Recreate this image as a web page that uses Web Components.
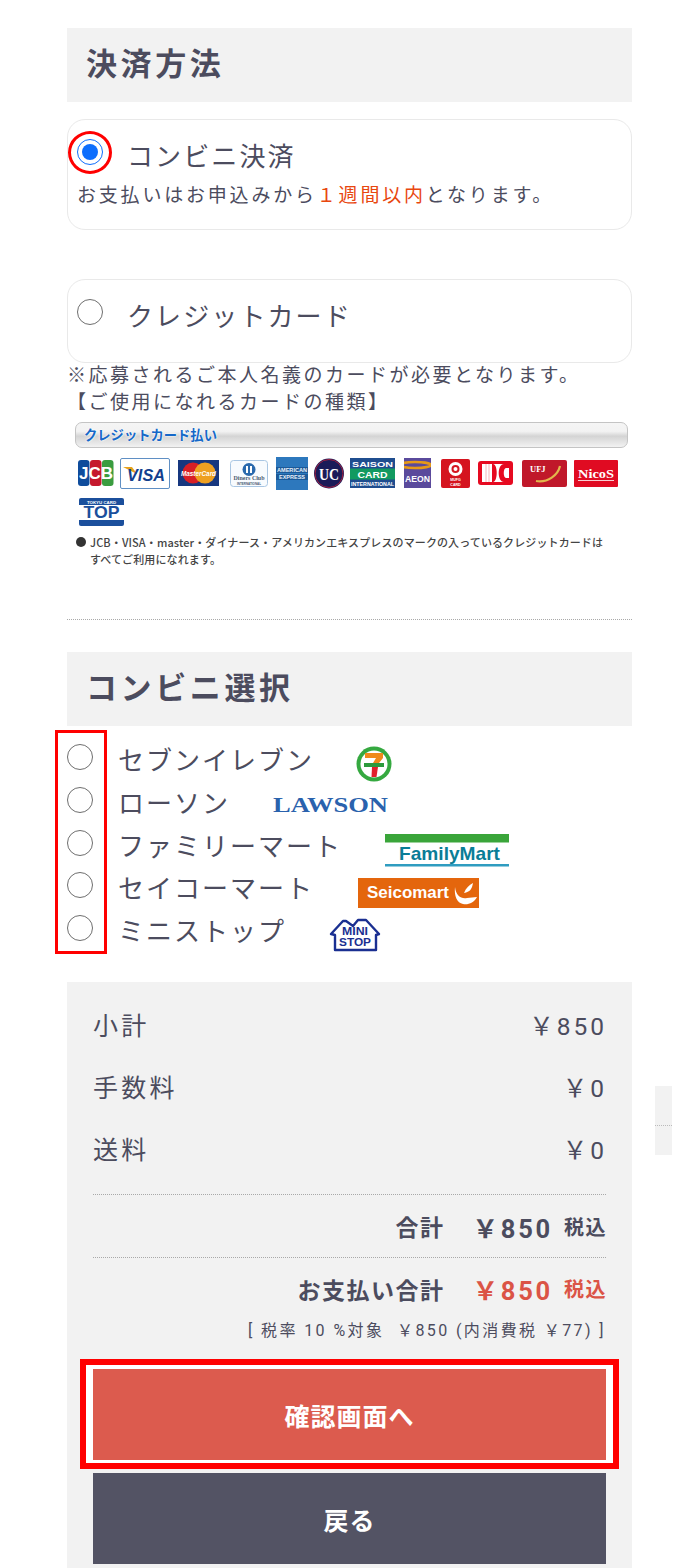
<!DOCTYPE html>
<html lang="ja"><head><meta charset="utf-8"><title>決済方法</title>
<style>
html,body{margin:0;padding:0;background:#fff;height:1568px;overflow:hidden}
body{font-family:"Noto Sans CJK JP","Noto Sans",sans-serif;color:#4c4c5e}
</style></head><body>
<checkout-page></checkout-page>
<template id="t-page"><style>
:host{display:block;position:relative;width:700px;height:1568px;overflow:hidden;box-sizing:border-box;padding:28px 68px 0 67px}
.gap-a{height:17px}.gap-b{height:49px}
.note{font-size:19px;line-height:27px;letter-spacing:2.5px;color:#4c4c5e;white-space:nowrap;margin-top:-3px}
hr{border:0;border-top:1px dotted #a9a9a9;margin:0}
.stores{position:relative;display:flex;flex-direction:column;padding-top:18px;height:256px;box-sizing:border-box}
.frame{position:absolute;left:-12px;top:4px;width:46px;height:218px;border:3px solid #f00;pointer-events:none}
.stub{position:absolute;left:655px;top:1086px;width:17px;height:69px;background:#f2f2f2}
.stub i{position:absolute;left:0;right:0;top:39px;border-top:1px dotted #bbb}
.fine{font-size:11px;line-height:17px;color:#444;padding-left:23px;position:relative;margin-top:8px;font-weight:500;white-space:nowrap;letter-spacing:.01em}
.fine b{position:absolute;left:9px;top:3px;width:10px;height:10px;border-radius:50%;background:#333}
</style>
<section-head>決済方法</section-head>
<div class="gap-a"></div>
<pay-option checked h="111" label="コンビニ決済">お支払いはお申込みから<span style="color:#e8470f">１週間以内</span>となります。</pay-option>
<div class="gap-b"></div>
<pay-option h="84" label="クレジットカード"></pay-option>
<div class="note">※応募されるご本人名義のカードが必要となります。<br>【ご使用になれるカードの種類】</div>
<card-bar>クレジットカード払い</card-bar>
<card-logos></card-logos>
<div class="fine"><b></b>JCB・VISA・master・ダイナース・アメリカンエキスプレスのマークの入っているクレジットカードは<br>すべてご利用になれます。</div>
<div style="height:51px"></div>
<hr>
<div style="height:32px"></div>
<section-head>コンビニ選択</section-head>
<div class="stores">
<store-row logo="seven">セブンイレブン</store-row>
<store-row logo="lawson">ローソン</store-row>
<store-row logo="family">ファミリーマート</store-row>
<store-row logo="seico">セイコーマート</store-row>
<store-row logo="mini">ミニストップ</store-row>
<div class="frame"></div>
</div>
<order-summary></order-summary>
<div class="stub"><i></i></div>
</template>

<template id="t-head"><style>
:host{display:flex;align-items:center;height:74px;box-sizing:border-box;padding:0 0 7px 19px;background:#f2f2f2;font-size:31px;font-weight:700;letter-spacing:3.6px;color:#4c4c5e;line-height:1}
</style><slot></slot></template>

<template id="t-radio"><style>
:host{display:block;box-sizing:border-box;width:26px;height:26px;border-radius:50%;border:1.5px solid #6e6e6e;background:#fff;flex:none}
:host([checked]){border-color:#0d6efd;position:relative}
:host([checked])::after{content:"";position:absolute;left:3.5px;top:3.5px;width:16px;height:16px;border-radius:50%;background:#0d6efd}
</style></template>

<template id="t-option"><style>
:host{display:block;box-sizing:border-box;border:1px solid #e9e9e9;border-radius:18px;position:relative;padding:0 9px;background:#fff}
.top{display:flex;align-items:flex-start;padding-top:19px}
.label{font-size:26px;letter-spacing:2.100px;line-height:36px;margin-left:24px;margin-top:-2px;color:#4c4c5e;white-space:nowrap}
.sub{font-size:19px;line-height:27px;margin-top:7px;white-space:nowrap;color:#4c4c5e;letter-spacing:2.8px}
.ring{position:absolute;left:0;top:11px;width:38px;height:37px;border:3px solid #f00;border-radius:50%;display:none}
:host([checked]) .ring{display:block}
</style><div class="top"><pay-radio></pay-radio><span class="label"></span></div><div class="sub"><slot></slot></div><span class="ring"></span></template>

<template id="t-bar"><style>
:host{display:block;box-sizing:border-box;margin:8px 4px 0 8px;width:553px;height:26px;border:1.5px solid #c4c4c4;border-radius:7px;background:linear-gradient(#f5f5f5,#f2f2f2 35%,#d4d4d4 55%,#e8e8e8 85%,#f2f2f2);font-size:13.3px;font-weight:700;color:#1668c8;line-height:23px;padding-left:8px;white-space:nowrap;text-shadow:0 0 2px #fff,0 0 2px #fff}
</style><slot></slot></template>

<template id="t-logos"><style>
:host{display:block;margin:7px 0 0 10.500px}
.row{display:flex;align-items:center;height:36px}
svg{display:block;flex:none;font-family:"Liberation Sans",sans-serif}
text{font-weight:700}
</style>
<div class="row">
<svg width="36" height="28" viewBox="0 0 36 28"><rect x="0" y="1" width="11.500" height="26" rx="3" fill="#0f4c9c"/><rect x="12" y="1" width="11.500" height="26" rx="3" fill="#c5192d"/><rect x="24" y="1" width="11.500" height="26" rx="3" fill="#3a9c3f"/><text x="1" y="20" font-size="16" fill="#fff" textLength="34" lengthAdjust="spacingAndGlyphs">JCB</text></svg>
<svg style="margin-left:6px" width="50" height="31" viewBox="0 0 50 31"><rect x=".5" y=".5" width="49" height="30" rx="1.500" fill="#fff" stroke="#5f8fc4"/><path d="M3 9l9 0 5 7z" fill="#e6a21e"/><text x="7" y="23" font-size="17" font-style="italic" fill="#123f8e" textLength="38" lengthAdjust="spacingAndGlyphs">VISA</text></svg>
<svg style="margin-left:8px" width="41" height="26" viewBox="0 0 41 26"><rect width="41" height="26" fill="#17377f"/><circle cx="15" cy="13" r="10.500" fill="#d71f26"/><circle cx="27" cy="13" r="10.500" fill="#eea021"/><text x="3" y="15.500" font-size="7" font-style="italic" fill="#fff" textLength="35" lengthAdjust="spacingAndGlyphs">MasterCard</text></svg>
<svg style="margin-left:11px" width="38" height="27" viewBox="0 0 38 27"><rect x=".5" y=".5" width="37" height="26" rx="3" fill="#f8fbfe" stroke="#a9c6e3"/><circle cx="19" cy="9.500" r="6.500" fill="#2a69ad"/><rect x="16" y="6" width="2" height="7" fill="#fff"/><rect x="20" y="6" width="2" height="7" fill="#fff"/><text x="3.500" y="20" font-size="6.500" font-weight="400" fill="#4a5a70" font-family="Liberation Serif" textLength="31" lengthAdjust="spacingAndGlyphs">Diners Club</text><text x="7" y="24.500" font-size="3" fill="#4a5a70" textLength="24" lengthAdjust="spacingAndGlyphs">INTERNATIONAL</text></svg>
<svg style="margin-left:8px" width="32" height="33" viewBox="0 0 32 33"><rect width="32" height="33" fill="#2d78bd"/><rect y="10" width="32" height="6" fill="#1c5a99"/><rect y="17" width="32" height="6" fill="#1c5a99"/><text x="1" y="15" font-size="5" fill="#e8f0fa" textLength="30" lengthAdjust="spacingAndGlyphs">AMERICAN</text><text x="3" y="22" font-size="5" fill="#e8f0fa" textLength="26" lengthAdjust="spacingAndGlyphs">EXPRESS</text></svg>
<svg style="margin-left:6px" width="30" height="31" viewBox="0 0 30 31"><circle cx="15" cy="15.500" r="15" fill="#1b1b58"/><circle cx="15" cy="15.500" r="14" fill="none" stroke="#c4213a" stroke-width=".8"/><text x="5" y="21.500" font-size="17" fill="#fff" font-family="Liberation Serif" textLength="20" lengthAdjust="spacingAndGlyphs">UC</text></svg>
<svg style="margin-left:6px" width="45" height="30" viewBox="0 0 45 30"><rect width="45" height="30" fill="#1f4d8f"/><rect y="10.500" width="45" height="11" fill="#129a60"/><text x="2" y="9" font-size="8" font-weight="400" fill="#fff" textLength="41" lengthAdjust="spacingAndGlyphs">SAISON</text><text x="7.500" y="19.500" font-size="9" font-weight="400" fill="#fff" textLength="30" lengthAdjust="spacingAndGlyphs">CARD</text><text x="1" y="27.500" font-size="5.500" fill="#fff" textLength="43" lengthAdjust="spacingAndGlyphs">INTERNATIONAL</text></svg>
<svg style="margin-left:9px" width="27" height="30" viewBox="0 0 27 30"><rect width="27" height="30" fill="#5a4a9c"/><ellipse cx="11" cy="7" rx="16" ry="3" fill="none" stroke="#e69a18" stroke-width="2.600"/><text x="1" y="24" font-size="9.500" font-weight="400" fill="#fff" textLength="25" lengthAdjust="spacingAndGlyphs">AEON</text></svg>
<svg style="margin-left:10px" width="29" height="29" viewBox="0 0 29 29"><rect width="29" height="29" rx="2" fill="#d5141f"/><circle cx="14.500" cy="10" r="7" fill="#fff"/><circle cx="14.500" cy="10" r="4" fill="#d5141f"/><circle cx="14.500" cy="10" r="2" fill="#fff"/><text x="14.500" y="22" font-size="3.600" text-anchor="middle" fill="#fff">MUFG</text><text x="14.500" y="26.500" font-size="3.600" text-anchor="middle" fill="#fff">CARD</text></svg>
<svg style="margin-left:8px" width="35" height="24" viewBox="0 0 35 24"><rect width="35" height="24" rx="3" fill="#e60a20"/><rect x="4" y="3" width="27" height="18" fill="#fff"/><path d="M8 3v18M11 3v18" stroke="#f6b5bb" stroke-width="1"/><path d="M14 3h1c5 0 5 18 0 18h-1zM31 3h-5c-7 0-7 18 0 18h5v-4h-3c-3 0-3-10 0-10h3z" fill="#e60a20"/></svg>
<svg style="margin-left:9px" width="45" height="27" viewBox="0 0 45 27"><rect width="45" height="27" rx="2" fill="#c0182a"/><text x="8" y="12" font-size="8.500" fill="#fff" font-family="Liberation Serif">UFJ</text><path d="M14 21c12 2 22-6 24-15" fill="none" stroke="#e2b64c" stroke-width="2.200"/></svg>
<svg style="margin-left:7px" width="44" height="27" viewBox="0 0 44 27"><rect width="44" height="27" rx="1" fill="#e00b22"/><text x="4" y="18" font-size="13" fill="#fff" font-family="Liberation Serif" textLength="36" lengthAdjust="spacingAndGlyphs">NicoS</text><rect x="4" y="20" width="36" height=".8" fill="#fff"/></svg>
</div>
<svg style="margin:7px 0 0 1px" width="45" height="28" viewBox="0 0 45 28"><rect width="45" height="28" rx="2" fill="#1b4f9c"/><rect x="0" y="7" width="45" height="15" fill="#fff"/><text x="22.500" y="5.600" font-size="4.400" text-anchor="middle" fill="#fff">TOKYU CARD</text><text x="4.500" y="20" font-size="17" fill="#1b4f9c" textLength="36" lengthAdjust="spacingAndGlyphs">TOP</text></svg>
</template>

<template id="t-store"><style>
:host{display:flex;align-items:flex-start;height:42.8px;position:relative}
.l{font-size:26px;letter-spacing:2px;line-height:36px;margin-left:25px;margin-top:-3px;white-space:nowrap;color:#4c4c5e}
svg{display:block;flex:none;font-family:"Liberation Sans",sans-serif}
text{font-weight:700}
.logo{display:block;flex:none}
</style><pay-radio></pay-radio><span class="l"><slot></slot></span><span class="logo"></span></template>

<template id="t-summary"><style>
:host{display:block;background:#f2f2f2;height:600px;box-sizing:border-box;padding:11px 26px 0 26px;position:relative;color:#4c4c5e}
.r{display:flex;justify-content:space-between;align-items:center;height:62px;font-size:25px;letter-spacing:3.300px;white-space:nowrap}
.r span:last-child{margin-right:-1px;font-family:Roboto,"Noto Sans CJK JP",sans-serif;font-size:24.500px;letter-spacing:3px}
hr{border:0;border-top:1px dotted #a9a9a9;margin:0}
.t{display:flex;justify-content:flex-end;align-items:center;height:62px;font-weight:700;white-space:nowrap}
.t.b{height:63px;margin-top:-1px}
.t .n{font-size:23px;letter-spacing:1.500px;margin-right:28px}
.t .v{font-family:Roboto,"Noto Sans CJK JP",sans-serif;font-size:25.500px;letter-spacing:2.800px;margin-right:11px}
.t .x{font-size:20px;letter-spacing:1.500px;margin-right:-1px}
.red{color:#db5446}
.tax{text-align:right;font-size:16px;letter-spacing:2.400px;font-family:Roboto,"Noto Sans CJK JP",sans-serif;line-height:22px;white-space:pre}
.btn{display:flex;align-items:center;justify-content:center;height:91px;font-size:25px;font-weight:700;color:#fff;letter-spacing:1px}
.goframe{margin:17px -13px 0;border:6px solid #f00;background:#fff;padding:4px 7px 3px}
.go{background:#dc5b4e}
.back{background:#535364;margin-top:4px}
</style>
<div class="r"><span>小計</span><span>￥850</span></div>
<div class="r"><span>手数料</span><span>￥0</span></div>
<div class="r"><span>送料</span><span>￥0</span></div>
<div style="height:15px"></div>
<hr>
<div class="t a"><span class="n">合計</span><span class="v">￥850</span><span class="x">税込</span></div>
<hr>
<div class="t b"><span class="n">お支払い合計</span><span class="v red">￥850</span><span class="x red">税込</span></div>
<div class="tax">[ 税率 10 %対象  ￥850 (内消費税 ￥77) ]</div>
<div class="goframe"><div class="btn go">確認画面へ</div></div>
<div class="btn back">戻る</div>
</template>

<script>
const LOGOS={
seven:'<svg style="margin:2px 0 0 42px" width="36" height="36" viewBox="0 0 36 36"><circle cx="18" cy="18" r="17.500" fill="#35a940"/><circle cx="18" cy="18" r="13.500" fill="#fff"/><path d="M9 7h18v5l-4 5h-6l3-5H9z" fill="#ef8a1a"/><rect x="8" y="17" width="20" height="4" fill="#2c9a3c"/><path d="M16 21h6l-1.500 10h-5z" fill="#e3202c"/></svg>',
lawson:'<svg style="margin:4px 0 0 43px" width="116" height="26" viewBox="0 0 116 26"><text x="0" y="20.500" font-size="21" fill="#2a62ad" font-family="Liberation Serif" textLength="115" lengthAdjust="spacingAndGlyphs">LAWSON</text></svg>',
family:'<svg style="margin:2px 0 0 43px" width="124" height="35" viewBox="0 0 124 35"><rect y="2" width="124" height="8.500" fill="#3aa53a"/><text x="14" y="28" font-size="19" fill="#0a7d97" textLength="101" lengthAdjust="spacingAndGlyphs">FamilyMart</text><rect y="32" width="124" height="2.500" fill="#2f9cc0"/></svg>',
seico:'<svg style="margin:6px 0 0 44px" width="121" height="30" viewBox="0 0 121 30"><rect width="121" height="30" fill="#e4660d"/><text x="9" y="20" font-size="16" fill="#fff" textLength="82" lengthAdjust="spacingAndGlyphs">Seicomart</text><path d="M97 9c1 9 6 12 12 11l10-1c-3 6-9 8-14 7-6-1-9-8-8-17zM106 15c2-5 5-8 9-10-1 6-3 9-9 10z" fill="#fff"/></svg>',
mini:'<svg style="margin:3px 0 0 43px" width="52" height="34" viewBox="0 0 52 34"><path d="M2 16L14 3h3l7 5 5-6h8l13 14-3 1v15H6V17z" fill="#fff" stroke="#1a2f91" stroke-width="2.400" stroke-linejoin="round"/><text x="13" y="17" font-size="11" fill="#1a2f91" textLength="26" lengthAdjust="spacingAndGlyphs">MINI</text><text x="10" y="27.500" font-size="11" fill="#1a2f91" textLength="32" lengthAdjust="spacingAndGlyphs">STOP</text></svg>'
};
function reg(name,tpl,setup){customElements.define(name,class extends HTMLElement{
 constructor(){super();const s=this.attachShadow({mode:'open'});s.appendChild(document.getElementById(tpl).content.cloneNode(true));}
 connectedCallback(){if(setup)setup(this,this.shadowRoot);}
});}
reg('section-head','t-head');
reg('pay-radio','t-radio');
reg('pay-option','t-option',(h,s)=>{
 h.style.height=h.getAttribute('h')+'px';
 s.querySelector('.label').textContent=h.getAttribute('label');
 if(h.hasAttribute('checked'))s.querySelector('pay-radio').setAttribute('checked','');
});
reg('card-bar','t-bar');
reg('card-logos','t-logos');
reg('store-row','t-store',(h,s)=>{s.querySelector('.logo').innerHTML=LOGOS[h.getAttribute('logo')];});
reg('order-summary','t-summary');
reg('checkout-page','t-page');
</script>
</body></html>
